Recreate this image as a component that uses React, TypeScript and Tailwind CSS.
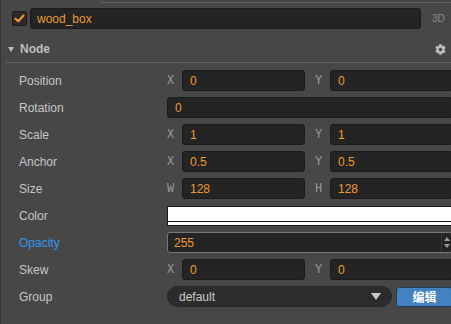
import React from "react";
import { FaCog } from "react-icons/fa";

const F = { fontFamily: '"Liberation Sans", Arial, sans-serif' } as React.CSSProperties;

function Axis({ c }: { c: string }) {
  return (
    <span
      className="w-[15px] shrink-0 text-[12px] text-[#9a9a9a] leading-none"
      style={{ fontFamily: '"Liberation Mono", "Courier New", monospace' }}
    >
      {c}
    </span>
  );
}

function Num({ v, w }: { v: string; w: string }) {
  return (
    <div
      className={`${w} h-[21px] shrink-0 rounded-[3px] bg-[#242424] border border-[#1b1b1b] flex items-center pl-[7px] text-[12px] text-[#ef9a2f]`}
    >
      {v}
    </div>
  );
}

function Pair({ a, b, va, vb }: { a: string; b: string; va: string; vb: string }) {
  return (
    <div className="flex items-center">
      <Axis c={a} />
      <Num v={va} w="w-[123px]" />
      <div className="w-[10px] shrink-0" />
      <Axis c={b} />
      <Num v={vb} w="w-[123px]" />
    </div>
  );
}

function Row({ label, blue, children }: { label: string; blue?: boolean; children: React.ReactNode }) {
  return (
    <div className="h-[27px] flex items-center">
      <div className={`w-[166px] shrink-0 pl-[18px] text-[12px] ${blue ? "text-[#2f98ec]" : "text-[#c6c6c6]"}`}>
        {label}
      </div>
      <div className="flex-1 min-w-0">{children}</div>
    </div>
  );
}

export default function App() {
  return (
    <div
      className="w-[451px] h-[324px] overflow-hidden bg-[#474747] border-l border-[#363636] flex flex-col"
      style={F}
    >
      <div className="h-[3px] shrink-0 ml-[100px] border-l border-b border-[#5e5e5e]" />
      <div className="flex items-center mt-[5px] h-[21px] shrink-0">
        <div className="ml-[11px] w-[15px] h-[15px] rounded-[2px] bg-[#2a2a2a] border border-[#1a1a1a] flex items-center justify-center">
          <svg width="11" height="11" viewBox="0 0 11 11">
            <path d="M1.5 5.8 L4.2 8.3 L9.5 2.6" fill="none" stroke="#f0952a" strokeWidth="2.2" strokeLinecap="round" strokeLinejoin="round" />
          </svg>
        </div>
        <div className="ml-[3px] w-[391px] h-[21px] rounded-[3px] bg-[#242424] border border-[#1b1b1b] flex items-center pl-[6px] text-[12px] text-[#ef9a2f]">
          wood_box
        </div>
        <div className="ml-[11px] text-[10px] text-[#8c8c8c]">3D</div>
      </div>
      <div className="ml-[5px] h-[27px] mt-[7px] shrink-0 flex items-center border-b border-[#646464]">
        <svg width="6" height="5" viewBox="0 0 6 5" className="ml-[2px]">
          <path d="M0 0 L6 0 L3 5 Z" fill="#bdbdbd" />
        </svg>
        <span className="ml-[6px] text-[12px] font-bold text-[#bdbdbd]">Node</span>
        <div className="flex-1" />
        <FaCog className="mr-[5px] text-[#bdbdbd]" size={11} />
      </div>
      <div className="mt-[4px] flex flex-col">
        <Row label="Position">
          <Pair a="X" b="Y" va="0" vb="0" />
        </Row>
        <Row label="Rotation">
          <Num v="0" w="w-[286px]" />
        </Row>
        <Row label="Scale">
          <Pair a="X" b="Y" va="1" vb="1" />
        </Row>
        <Row label="Anchor">
          <Pair a="X" b="Y" va="0.5" vb="0.5" />
        </Row>
        <Row label="Size">
          <Pair a="W" b="H" va="128" vb="128" />
        </Row>
        <Row label="Color">
          <div className="w-[286px] h-[20px] bg-white border border-[#1a1a1a] flex flex-col">
            <div className="flex-1" />
            <div className="h-[1px] bg-[#111]" />
            <div className="h-[3px]" />
          </div>
        </Row>
        <Row label="Opacity" blue>
          <div className="w-[286px] h-[21px] rounded-[3px] bg-[#242424] border border-[#787878] flex items-center text-[12px] text-[#ef9a2f]">
            <span className="pl-[6px] flex-1">255</span>
            <div className="w-[10px] h-full border-l border-[#3a3a3a] flex flex-col items-center justify-center gap-[3px] mr-[1px]">
              <svg width="6" height="4" viewBox="0 0 6 4"><path d="M0 4 L3 0 L6 4 Z" fill="#9a9a9a" /></svg>
              <svg width="6" height="4" viewBox="0 0 6 4"><path d="M0 0 L6 0 L3 4 Z" fill="#9a9a9a" /></svg>
            </div>
          </div>
        </Row>
        <Row label="Skew">
          <Pair a="X" b="Y" va="0" vb="0" />
        </Row>
        <Row label="Group">
          <div className="flex items-center">
            <div className="w-[225px] h-[21px] shrink-0 rounded-full bg-[#2c2c2c] border border-[#262626] flex items-center pl-[11px] pr-[10px] text-[12px] text-[#cdcdcd]">
              <span className="flex-1">default</span>
              <svg width="10" height="7" viewBox="0 0 10 7"><path d="M0 0 L10 0 L5 7 Z" fill="#c8c8c8" /></svg>
            </div>
            <div
              className="ml-[4px] w-[57px] h-[20px] shrink-0 rounded-[3px] bg-[#4281c2] border border-[#213e5e] flex items-center justify-center text-[12px] font-bold text-white"
              style={{ fontFamily: '"Noto Sans CJK SC", "Liberation Sans", sans-serif' }}
            >
              编辑
            </div>
          </div>
        </Row>
      </div>
    </div>
  );
}
